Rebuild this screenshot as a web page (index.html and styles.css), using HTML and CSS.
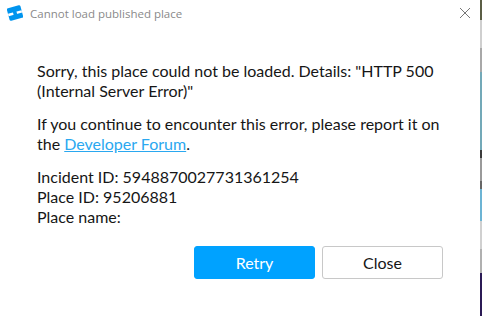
FILE: index.html
```html
<!DOCTYPE html>
<html lang="en">
<head>
  <meta charset="UTF-8" />
  <title>Cannot load published place</title>
  <link rel="stylesheet" href="styles.css">
</head>
<body>
  <div class="dialog">
    <div class="titlebar">
      <svg class="app-icon" width="16" height="16" viewBox="0 0 16 16">
        <g transform="rotate(-15 8 8)">
          <rect x="1" y="1.5" width="14" height="13" rx="1.5" fill="#0094ee"/>
          <rect x="1" y="7" width="14" height="2.4" fill="#ffffff"/>
          <rect x="6.2" y="5.8" width="3.6" height="4.8" fill="#0094ee"/>
        </g>
      </svg>
      <span class="title">Cannot load published place</span>
      <span class="close-x">
        <svg width="12" height="12" viewBox="0 0 12 12">
          <path d="M1 1 L11 11 M11 1 L1 11" stroke="#777" stroke-width="1" fill="none"/>
        </svg>
      </span>
    </div>

    <div class="content">
      <p>Sorry, this place could not be loaded. Details: "HTTP 500 (Internal Server Error)"</p>
      <p>If you continue to encounter this error, please report it on the <a href="#">Developer Forum</a>.</p>
      <p class="ids">
        Incident ID: 5948870027731361254<br>
        Place ID: 95206881<br>
        Place name:
      </p>
    </div>

    <div class="actions">
      <button class="btn btn-primary">Retry</button>
      <button class="btn">Close</button>
    </div>
  </div>
  <div class="desktop-edge"></div>
</body>
</html>
```

FILE: styles.css
```css
* { box-sizing: border-box; }

html, body {
  margin: 0;
  height: 100%;
}

body {
  display: flex;
  background: #fff;
  font-family: Lato, "Noto Sans", sans-serif;
  color: #161616;
}

.dialog {
  width: 480px;
  height: 316px;
  background: #fff;
  display: flex;
  flex-direction: column;
}

.desktop-edge {
  width: 2px;
  height: 316px;
  background: linear-gradient(to bottom,
    #5b5e45 0, #5b5e45 20px,
    #cfcfcf 20px, #cfcfcf 48px,
    #a8a8a8 48px, #a8a8a8 72px,
    #73a9b8 72px, #73a9b8 150px,
    #3a3a3a 150px, #3a3a3a 158px,
    #9a9a9a 158px, #9a9a9a 181px,
    #666 181px, #666 189px,
    #6cb4d4 189px, #6cb4d4 221px,
    #d0d0d0 221px, #d0d0d0 249px,
    #b0b0b0 249px, #b0b0b0 273px,
    #2b1a55 273px);
}

.titlebar {
  height: 26px;
  display: flex;
  align-items: center;
  padding-left: 7px;
}

.app-icon {
  flex: none;
  margin-right: 7px;
}

.title {
  flex: 1;
  font-family: "Open Sans", sans-serif;
  font-size: 11.5px;
  color: #8a8a8a;
}

.close-x {
  width: 30px;
  display: flex;
  justify-content: center;
}

.content {
  padding: 0 30px 0 37px;
  margin-top: 35px;
  font-size: 16px;
  line-height: 20px;
}

.content p {
  margin: 0 0 13px;
}

.content p.ids {
  margin-top: 12px;
}

.content a {
  color: #2aa8f0;
  text-decoration: underline;
}

.actions {
  display: flex;
  justify-content: flex-end;
  gap: 7px;
  padding-right: 37px;
  margin-top: 6px;
}

.btn {
  width: 121px;
  height: 33px;
  font-family: Lato, "Noto Sans", sans-serif;
  font-size: 16px;
  background: #fff;
  color: #161616;
  border: 1px solid #c8c8c8;
  border-radius: 3px;
}

.btn-primary {
  background: #00a2ff;
  border-color: #00a2ff;
  color: #fff;
}
```
